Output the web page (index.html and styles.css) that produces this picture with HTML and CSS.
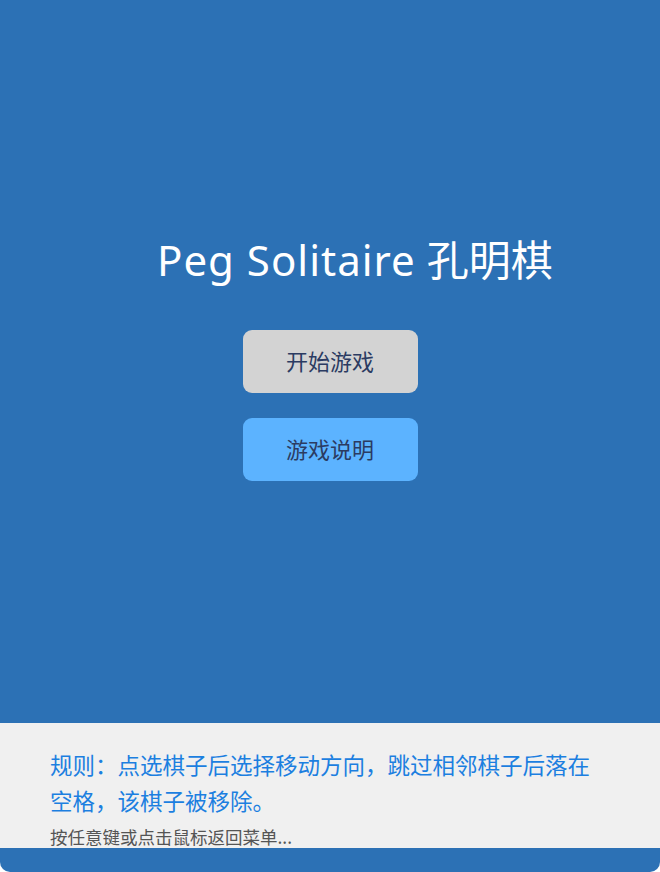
FILE: index.html
```html
<!DOCTYPE html>
<html lang="zh">
<head>
<meta charset="utf-8">
<title>Peg Solitaire 孔明棋</title>
<link rel="stylesheet" href="styles.css">
</head>
<body>
<div class="app">
  <main class="menu">
    <h1 class="title"><span class="title-latin">Peg Solitaire</span> 孔明棋</h1>
    <div class="buttons">
      <button class="btn btn-start">开始游戏</button>
      <button class="btn btn-help">游戏说明</button>
    </div>
  </main>
  <section class="panel">
    <p class="rules">规则：点选棋子后选择移动方向，跳过相邻棋子后落在空格，该棋子被移除。</p>
    <p class="hint">按任意键或点击鼠标返回菜单...</p>
  </section>
  <div class="strip"></div>
</div>
</body>
</html>
```
FILE: styles.css
```css
html, body {
  margin: 0;
  padding: 0;
  background: #ffffff;
}
body {
  font-family: "Noto Sans", "Noto Sans CJK SC", sans-serif;
}
.app {
  width: 660px;
  height: 872px;
  background: #2c71b5;
  border-radius: 0 0 10px 10px;
  overflow: hidden;
  display: flex;
  flex-direction: column;
}
.menu {
  flex: 1;
  display: flex;
  flex-direction: column;
  align-items: center;
  padding-top: 235px;
}
.title {
  align-self: flex-start;
  margin: 0 0 0 157px;
  font-weight: 400;
  font-size: 42px;
  line-height: 50px;
  color: #ffffff;
  font-family: "Noto Sans", "Noto Sans CJK SC", sans-serif;
  white-space: nowrap;
}
.title-latin {
  letter-spacing: 1px;
}
.buttons {
  margin-top: 45px;
  display: flex;
  flex-direction: column;
  gap: 25px;
}
.btn {
  width: 175px;
  height: 63px;
  border: none;
  border-radius: 9px;
  font-family: "Noto Sans CJK SC", sans-serif;
  font-size: 22px;
  color: #2b3b62;
  padding: 0 0 3px;
}
.btn-start {
  background: #d3d3d3;
}
.btn-help {
  background: #5cb3ff;
}
.panel {
  height: 125px;
  box-sizing: border-box;
  background: #f0f0f0;
  padding: 23px 50px 0;
}
.rules {
  margin: 0;
  font-family: "Noto Sans CJK SC", sans-serif;
  font-size: 22.5px;
  line-height: 36px;
  color: #1c7fe0;
}
.hint {
  margin: 9px 0 0;
  font-family: "Noto Sans CJK SC", sans-serif;
  font-size: 17.5px;
  line-height: 20px;
  color: #555555;
}
.strip {
  height: 24px;
}
```
